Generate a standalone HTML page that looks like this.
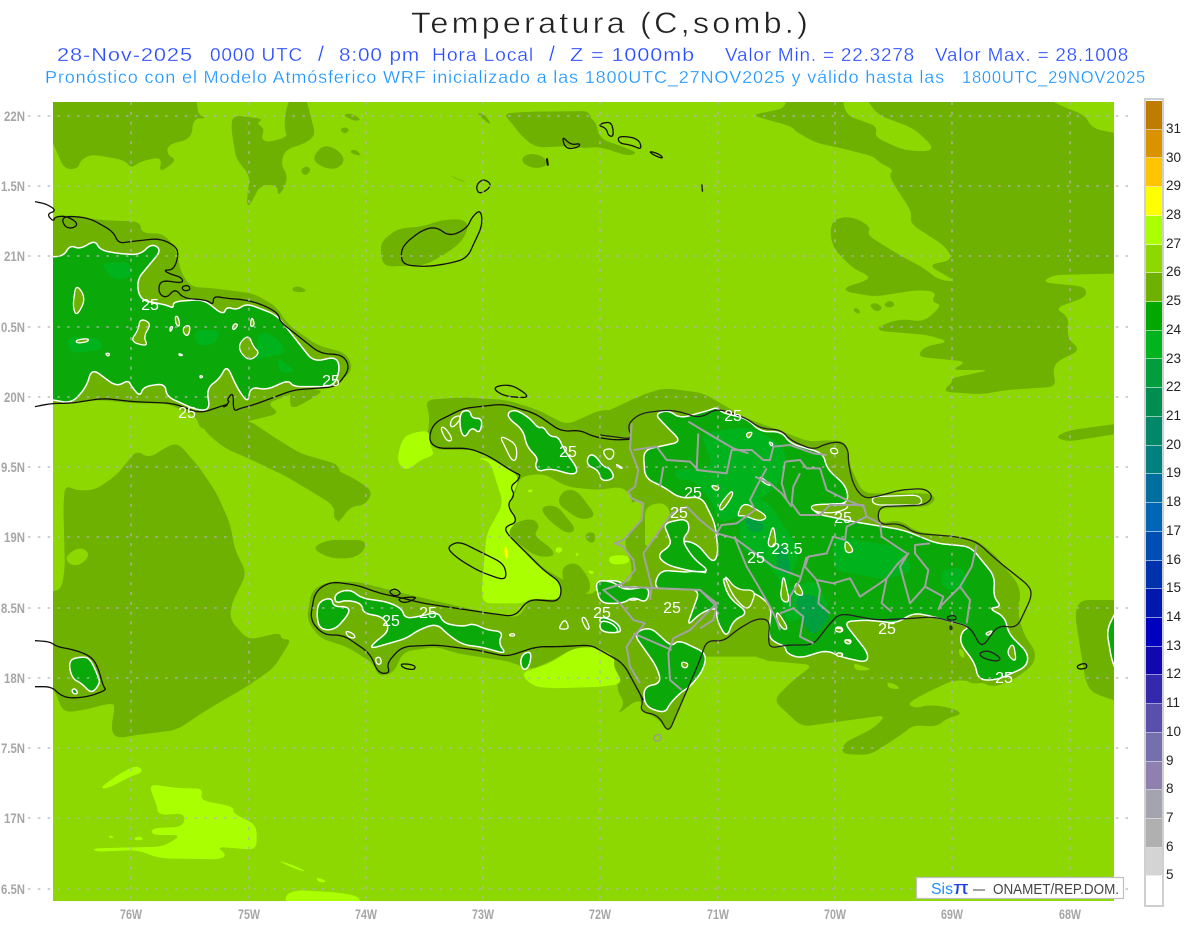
<!DOCTYPE html>
<html lang="es"><head><meta charset="utf-8"><title>Temperatura (C,somb.)</title>
<style>
html,body{margin:0;padding:0;background:#fff}
body{width:1200px;height:927px;overflow:hidden;position:relative}
svg{position:absolute;left:0;top:0}
svg *{vector-effect:non-scaling-stroke}
text{font-family:"Liberation Sans",sans-serif}
.ax{fill:#a6a6a6;font-size:14px;font-weight:bold}
.cb{fill:#222;font-size:13.5px}
.v{fill:#fff;font-size:16px;text-anchor:middle}
.t2 text{stroke:#fff;stroke-width:.25px;letter-spacing:.8px}
#bar{position:absolute;left:1144px;top:98px;width:15.5px;height:803px;border:2px solid #cfcfcf;padding:1px 0 1px 0;display:flex;flex-direction:column}
#bar i{flex:1;display:block;border-bottom:1px solid rgba(255,255,255,.55);box-sizing:border-box}
</style></head><body>
<svg width="1200" height="927" viewBox="0 0 1200 927" xmlns="http://www.w3.org/2000/svg">
<defs><clipPath id="m"><rect x="53" y="102" width="1061" height="799"/></clipPath></defs>
<text x="411" y="33" font-size="30" textLength="400" lengthAdjust="spacingAndGlyphs" fill="#222" stroke="#fff" stroke-width=".45" letter-spacing="3">Temperatura (C,somb.)</text>
<g fill="#2a4cff" font-size="18.5" class="t2">
<text x="57" y="61" textLength="136" lengthAdjust="spacingAndGlyphs">28-Nov-2025</text>
<text x="210" y="61" textLength="93" lengthAdjust="spacingAndGlyphs">0000 UTC</text>
<text x="318" y="61" font-size="21">/</text>
<text x="339" y="61" textLength="81" lengthAdjust="spacingAndGlyphs">8:00 pm</text>
<text x="432" y="61" textLength="102" lengthAdjust="spacingAndGlyphs">Hora Local</text>
<text x="549" y="61" font-size="21">/</text>
<text x="570" y="61" textLength="125" lengthAdjust="spacingAndGlyphs">Z = 1000mb</text>
<text x="725" y="61" textLength="190" lengthAdjust="spacingAndGlyphs">Valor Min. = 22.3278</text>
<text x="935" y="61" textLength="194" lengthAdjust="spacingAndGlyphs">Valor Max. = 28.1008</text>
</g>
<g fill="#1d96ff" font-size="17.5" class="t2">
<text x="45" y="83" textLength="900" lengthAdjust="spacingAndGlyphs">Pronóstico con el Modelo Atmósferico WRF inicializado a las 1800UTC_27NOV2025 y válido hasta las</text>
<text x="962" y="83" textLength="184" lengthAdjust="spacingAndGlyphs">1800UTC_29NOV2025</text>
</g>

<g clip-path="url(#m)">
<rect x="53" y="102" width="1061" height="799" fill="#8cd800"/>
<!-- MID GREEN -->
<g fill="#6eb100">
<g transform="translate(40 95) scale(.34437 .33333)">
<polygon points="10,0 455,0 455,20 460,60 485,70 445,70 440,130 370,150 370,180 398,195 345,235 355,185 290,200 265,220 245,195 150,178 118,195 110,222 70,222 38,145 10,80"/>
<polygon points="560,60 650,72 628,85 652,100 642,130 660,143 720,125 710,105 712,50 730,0 770,0 790,80 800,120 770,145 710,165 700,210 718,240 712,275 690,305 690,270 640,270 620,310 605,335 600,320 610,240 570,195 555,100"/>
<polygon points="790,190 820,150 860,160 888,195 860,225 815,215"/>
<polygon points="755,225 775,212 788,225 770,245"/>
<polygon points="870,105 885,95 900,105 885,117"/>
<polygon points="878,58 905,55 935,75 910,78"/>
<polygon points="898,170 915,162 935,182 915,180"/>
<polygon points="1265,55 1290,55 1315,95"/>
<polygon points="1345,55 1425,50 1600,48 1600,150 1440,158 1400,125 1370,85"/>
<polygon points="1398,190 1420,175 1460,182 1478,210 1440,222 1405,208"/>
<polygon points="990,440 1040,400 1110,395 1165,375 1230,372 1245,395 1225,440 1180,475 1120,510 1000,515 990,480"/>
<polygon points="730,580 750,572 780,590 740,592"/>
<polygon points="1185,238 1245,265 1215,255"/>
</g>
<g transform="translate(560 95) scale(.35714 .33333)">
<polygon points="0,55 60,58 100,75 110,130 200,165 215,175 190,183 110,155 60,160 0,150"/>
<polygon points="535,60 630,40 635,0 1340,0 1420,40 1470,60 1490,100 1580,120 1580,535 1380,540 1350,562 1470,575 1475,605 1385,640 1425,665 1420,730 1458,765 1390,800 1380,830 1390,875 1250,885 1180,898 1070,890 1100,860 1095,850 1205,825 1095,825 1140,800 1000,785 1020,755 1090,740 1030,720 895,708 890,695 950,672 1020,680 1070,630 1040,620 1055,590 1000,585 880,605 800,590 800,575 850,560 870,545 820,520 765,460 755,405 770,370 820,365 870,395 860,420 950,480 1020,520 1060,555 1110,560 1030,510 1100,495 1080,455 980,385 985,350 945,285 920,240 935,225 890,200 880,185 770,155 720,145 660,110 650,95"/>
<polygon points="1385,1025 1430,1005 1570,985 1570,1015 1420,1040"/>
<polygon points="820,640 835,640 842,655 828,655"/>
<polygon points="865,630 885,622 905,640 885,652"/>
<polygon points="905,628 925,615 940,630 920,640"/>
</g>
<g transform="translate(560 95) scale(.35714 .33333)" fill="#8cd800">
<polygon points="790,0 850,0 890,60 990,100 1045,155 1030,170 960,165 880,125 890,95 800,60"/>
</g>
<g transform="translate(40 420) scale(.33333)">
<polygon points="-20,515 39,515 65,505 75,440 70,260 75,195 110,212 165,210 230,165 290,90 325,115 395,72 420,75 480,145 530,220 570,310 585,390 620,460 575,550 570,600 625,660 720,638 725,658 755,658 700,745 620,800 500,870 410,930 290,945 230,955 213,930 225,855 210,850 130,870 70,878 39,800 -20,800"/>
<polygon points="475,0 625,0 700,50 780,100 900,135 900,310 890,300 880,255 815,215 740,170 625,115 555,85 500,40"/>
</g>
<g transform="translate(40 420) scale(.33333)" fill="#8cd800">
<polygon points="80,405 120,380 150,400 130,430 100,438 80,425"/>
</g>
<g transform="translate(0 190) scale(.33333)">
<polygon points="120,90 200,75 300,90 420,95 425,130 490,130 530,180 540,240 570,290 640,295 760,310 830,350 860,400 950,465 1040,490 1060,540 1000,590 880,610 800,640 840,670 760,690 600,720 590,680 500,640 400,640 300,630 120,640"/>
</g>
<g transform="translate(290 390) scale(.33333)">
<polygon points="0,0 105,0 50,35 0,60"/>
<polygon points="0,185 100,220 200,270 250,305 225,345 180,350 150,395 130,385 135,345 60,300 0,265"/>
<polygon points="65,475 110,450 225,450 225,480 190,505 120,505"/>
<polygon points="405,30 520,22 650,30 745,60 830,105 930,60 1000,60 1100,50 1100,900 1050,900 1000,960 1000,880 970,850 975,800 900,770 850,775 780,815 720,840 660,815 500,790 440,770 340,785 310,850 265,860 250,820 170,770 90,745 50,690 65,600 115,575 200,575 340,610 510,650 650,680 690,680 720,625 810,630 815,580 760,540 650,425 680,395 655,345 690,260 650,235 560,180 440,180 410,150 420,80"/>
</g>
<g transform="translate(600 390) scale(.33333)">
<polygon points="-39,165 -3,75 126,15 192,-6 309,9 438,84 630,156 680,150 740,155 750,230 790,310 985,310 1010,325 985,350 835,355 835,400 900,390 950,425 1130,450 1190,500 1260,590 1260,650 1200,650 1290,760 1290,830 1240,860 1150,880 1100,880 1060,800 800,700 500,800 300,800 0,700"/>
<polygon points="50,975 110,930 130,940 125,965 175,985 205,1030 225,985 320,780 360,760 250,600 60,820 50,900 75,940"/>
<polygon points="400,710 415,760 480,810 560,800 540,720"/>
</g>
<g transform="translate(760 600) scale(.33333)">
<polygon points="0,0 780,0 775,50 795,110 828,155 820,195 760,240 700,262 660,245 580,240 495,280 440,312 470,325 500,315 560,320 612,340 560,355 530,380 460,375 430,400 330,465 245,462 250,430 340,385 380,345 125,380 40,300 100,240 160,195 0,180"/>
<polygon points="960,0 1090,0 1090,310 1000,280 978,250 955,110 945,40"/>
</g>
<g transform="translate(760 600) scale(.33333)" fill="#8cd800">
<polygon points="380,245 410,255 420,268 385,265"/>
<polygon points="280,190 300,195 340,210 285,212"/>
<polygon points="595,145 610,150 615,175 600,170"/>
</g>
</g>
<!-- LIGHT PATCHES ON LAND -->
<g fill="#8cd800">
<g transform="translate(290 390) scale(.33333)">
<polygon points="690,260 760,250 830,290 920,300 1000,290 1030,330 1010,440 970,470 1010,490 1020,560 940,580 900,620 820,570 760,535 690,465 650,425 680,395 655,345 680,300"/>
</g>
<g transform="translate(600 390) scale(.33333)">
<polygon points="100,330 130,340 125,390 70,450 95,520 95,580 10,570 0,470 60,440 60,380"/>
<polygon points="135,350 190,335 215,370 190,410 135,480"/>
</g>
</g>
<g fill="#6eb100" transform="translate(290 390) scale(.33333)">
<polygon points="680,395 730,385 750,410 730,435 790,480 790,500 740,500 690,465 650,425"/>
<polygon points="750,350 800,345 860,420 830,432 770,385"/>
<polygon points="820,300 860,300 920,380 870,390 800,340"/>
<polygon points="885,430 915,425 915,460 890,455"/>
<polygon points="815,530 860,515 900,570 900,610 840,620 820,580"/>
</g>
<!-- BRIGHT -->
<g fill="#aaff00">
<g transform="translate(290 390) scale(.33333)">
<polygon points="560,205 600,215 640,340 590,430 575,600 580,640 700,640 720,625 810,630 815,580 760,540 700,480 650,430 680,395 655,345 690,262 650,235 600,205"/>
<polygon points="690,850 780,820 850,775 920,770 975,800 970,830 1000,880 940,890 800,895 730,890"/>
<polygon points="320,215 335,150 360,130 420,120 420,170 435,195 390,210 350,245"/>
<polygon points="955,497 1015,495 1020,520 960,525"/>
<polygon points="800,470 820,475 810,490 795,485"/>
<polygon points="710,300 730,298 722,310"/>
<polygon points="890,540 915,545 905,555"/>
<polygon points="855,490 868,490 860,500"/>
</g>
<g transform="translate(40 420) scale(.33333)">
<polygon points="178,1105 240,1060 290,1035 312,1055 270,1070 205,1105"/>
<polygon points="325,1092 420,1105 490,1105 480,1140 580,1160 580,1180 650,1215 650,1290 530,1280 560,1305 540,1318 360,1315 290,1290 165,1295 160,1285 370,1280 425,1245 335,1245 335,1225 430,1220 435,1180 355,1185 350,1155"/>
<polygon points="280,1255 300,1248 312,1258 290,1262"/>
<polygon points="205,1245 225,1252 210,1255"/>
<polygon points="710,1320 760,1335 805,1358 760,1345"/>
<polygon points="828,1370 865,1385 835,1388"/>
<polygon points="735,1425 770,1410 900,1418 960,1430 960,1460 740,1460"/>
</g>
</g>
<polygon transform="translate(290 390) scale(.33333)" fill="#ffff00" points="642,472 652,470 655,505 645,507"/>
<!-- DARK GREEN with white contour -->
<g fill="#0aa808" stroke="#fff" stroke-width="1.5" stroke-linejoin="round">
<g transform="translate(0 190) scale(.33333)">
<polygon points="130,200 190,200 210,165 240,178 285,150 300,180 350,190 420,195 455,160 485,180 410,270 420,330 500,345 520,355 520,335 610,328 670,375 680,350 710,360 740,340 830,375 940,515 1010,500 1020,540 1000,590 880,590 865,570 800,600 750,590 745,640 715,600 680,525 660,565 620,595 630,660 590,660 500,620 495,580 430,590 420,620 395,590 385,570 350,590 275,535 260,590 215,640 130,625"/>
</g>
<g transform="translate(40 420) scale(.33333)">
<polygon points="85,720 125,710 150,715 175,770 180,790 155,822 125,790 95,775"/>
<polygon points="95,810 105,805 115,820 100,822"/>
</g>
<g transform="translate(290 390) scale(.33333)">
<polygon points="85,635 125,622 130,650 175,650 178,670 135,720 90,718 80,680"/>
<polygon points="135,610 180,597 215,625 290,635 335,655 345,685 385,680 445,665 460,700 520,710 550,700 590,720 640,725 625,760 650,792 570,770 520,765 475,735 440,700 385,720 350,745 245,775 245,765 300,720 280,680 220,670 215,640 170,630 135,640"/>
<polygon points="510,65 540,60 545,85 578,85 570,132 545,110 525,145 510,120"/>
<polygon points="655,65 680,60 720,85 745,115 760,110 780,140 805,140 820,175 865,240 850,255 780,235 745,245 735,225 745,205 710,170 700,120 655,85"/>
<polygon points="895,195 915,195 940,230 960,235 975,265 935,275 925,240 890,225"/>
<polygon points="690,815 700,790 725,785 718,830 700,842"/>
<polygon points="940,680 985,700 995,730 950,720 925,690"/>
<polygon points="945,570 1000,575 985,600 1050,585 1050,630 1010,630 980,600 945,590"/>
</g>
<g transform="translate(600 390) scale(.33333)">
<polygon points="165,72 205,60 240,85 330,60 350,52 370,70 440,85 480,125 545,125 570,160 670,190 680,235 740,290 745,340 630,345 650,372 760,395 910,420 1010,460 1112,470 1185,560 1180,620 1205,650 1165,655 1215,680 1225,730 1285,790 1280,830 1190,870 1135,870 1125,820 1080,760 1085,725 1110,710 1000,680 940,668 890,700 800,690 730,695 805,790 800,818 720,800 680,780 600,805 560,790 555,768 530,760 505,740 515,650 470,610 410,600 365,555 385,620 445,670 400,690 380,745 350,690 350,650 300,670 260,710 300,600 160,595 180,540 240,545 330,550 250,500 240,450 290,460 340,520 355,490 345,400 305,320 240,325 190,290 135,265 130,180 245,155 190,100"/>
<polygon points="190,400 260,385 270,420 245,450 280,505 330,545 280,545 200,525 170,495 215,465 205,435"/>
<polygon points="100,730 150,710 215,770 235,750 320,790 310,840 270,890 245,905 210,940 195,970 135,950 130,890 185,880 170,830"/>
<polygon points="-15,570 40,575 70,600 150,590 140,640 100,620 70,640 0,640"/>
<polygon points="0,690 40,700 60,730 0,725"/>
</g>
<g transform="translate(760 600) scale(.33333)">
<polyline points="1070,30 1040,90 1055,180 1070,215"/>
</g>
</g>
<!-- LIGHTER GREEN INTERNAL PATCHES -->
<g fill="#00b31c">
<g transform="translate(0 190) scale(.33333)">
<polygon points="300,220 390,215 395,265 340,270"/>
<polygon points="580,420 660,420 650,460 590,470"/>
<polygon points="780,420 840,450 860,490 760,510"/>
<polygon points="830,500 890,545 840,550"/>
<polygon points="200,440 300,445 310,480 210,490"/>
</g>
<g transform="translate(600 390) scale(.33333)">
<polygon points="300,130 440,110 500,135 560,180 540,280 480,330 420,380 360,400 340,340 280,270 230,270 220,240 340,230"/>
<polygon points="420,330 500,330 560,420 600,480 560,600 500,520 420,470"/>
<polygon points="700,440 900,470 940,540 860,570 700,540"/>
<polygon points="1020,540 1090,530 1100,600 1030,600"/>
<polygon points="540,600 650,570 690,660 560,700"/>
</g>
</g>
<g fill="#00a040" transform="translate(600 390) scale(.33333)">
<polygon points="580,620 640,610 695,680 640,740 610,700"/>
<polygon points="430,390 470,370 500,420 450,430"/>
<polygon points="530,470 560,470 575,560 530,540"/>
</g>
<!-- M holes with white outline -->
<g fill="#6eb100" stroke="#fff" stroke-width="1.3" stroke-linejoin="round">
<g transform="translate(0 190) scale(.33333)">
<polygon points="228,280 258,325 230,380 218,350"/>
<polygon points="420,385 455,400 430,440 445,470 390,455 415,420"/>
<polygon points="745,432 760,470 780,490 745,515 710,470"/>
<polygon points="550,410 572,405 565,440 550,430"/>
<polygon points="755,378 765,405 750,412"/>
<polygon points="525,378 535,380 540,410 528,405"/>
<polygon points="510,410 520,410 510,428"/>
<polygon points="705,400 715,405 700,422 697,410"/>
<polygon points="228,450 265,445 265,455 230,460"/>
<polygon points="315,490 330,490 325,500"/>
<polygon points="535,490 550,495 540,498"/>
<polygon points="600,555 610,560 600,565"/>
</g>
<g transform="translate(290 390) scale(.33333)">
<polygon points="485,85 510,75 510,90 490,112 480,108"/>
<polygon points="450,112 465,112 490,150 470,155"/>
<polygon points="630,140 650,145 680,165 680,210 665,212 645,170"/>
<polygon points="935,180 970,175 972,200 955,212"/>
<polygon points="975,220 1000,235 990,235"/>
<polygon points="805,715 825,685 838,715 820,718"/>
<polygon points="873,685 885,680 900,715 890,720"/>
<polygon points="165,722 190,730 197,745 175,742"/>
<polygon points="255,805 270,800 275,820 262,825"/>
<polygon points="658,733 672,730 675,738 660,738"/>
</g>
<g transform="translate(600 390) scale(.33333)">
<polygon points="437,130 460,125 445,148"/>
<polygon points="505,155 520,160 515,170"/>
<polygon points="690,175 710,175 715,190 695,192"/>
<polygon points="330,285 360,290 350,305"/>
<polygon points="395,300 400,315 365,365 355,350"/>
<polygon points="475,255 520,290 490,280"/>
<polygon points="410,380 430,335 505,380 480,395 430,375"/>
<polygon points="630,345 740,340 745,355 700,370 640,365"/>
<polygon points="735,445 765,485 735,490"/>
<polygon points="815,320 960,315 968,345 820,345"/>
<polygon points="705,712 725,710 730,725 712,725"/>
<polygon points="735,748 755,750 750,762 735,760"/>
<polygon points="710,788 730,790 725,800 712,798"/>
<polygon points="1155,730 1180,720 1165,738"/>
<polygon points="1240,755 1250,820 1218,790"/>
<polygon points="245,815 265,820 260,835 245,830"/>
<polygon points="165,590 240,560 260,545 330,550 340,595 190,595" fill="#0aa808" stroke="none"/>
<polygon points="370,550 400,620 445,665 470,600 410,600"/>
<polygon points="550,550 570,640 540,630"/>
<polygon points="520,400 530,470 500,470"/>
<polygon points="590,570 615,620 580,610"/>
</g>
<g transform="translate(760 600) scale(.33333)">
<polygon points="225,85 245,85 245,97 228,95"/>
<polygon points="255,118 272,125 270,132 255,128"/>
<polygon points="230,158 248,160 245,170 230,168"/>
<polygon points="50,30 85,85 70,90 50,60"/>
</g>
</g>
</g>

<!-- BLACK COASTS -->
<g fill="none" stroke="#111" stroke-width="1.3" stroke-linejoin="round">
<g transform="translate(0 190) scale(.33333)">
<polyline points="105,35 140,42 170,62 140,72 160,95 165,80 200,78 235,100 220,115 195,112 185,85 210,78 270,85 340,125 355,160 390,155 480,145 530,170 535,200 520,240 490,240 510,252 545,262 550,280 480,270 475,310 500,325 525,295 550,325 620,330 640,345 640,318 680,325 740,330 790,345 835,370 840,395 960,490 1030,495 1050,535 1010,590 880,600 760,645 720,655 700,665 700,605 680,630 690,635 665,655 690,640 600,670 520,640 400,635 310,625 210,640 155,640 105,650"/>
<polygon points="545,290 565,285 572,300 550,303"/>
</g>
<g transform="translate(40 420) scale(.33333)">
<polyline points="-15,662 30,665 50,680 105,690 155,710 175,745 190,800 200,810 145,830 90,835 60,825 35,800 -15,800"/>
</g>
<g transform="translate(40 95) scale(.34437 .33333)">
<polygon points="1047,475 1060,445 1110,405 1150,395 1190,425 1240,400 1255,365 1280,343 1285,390 1240,490 1190,505 1125,515 1055,510"/>
<polygon points="1265,272 1288,250 1315,272 1275,300"/>
<polyline points="1472,190 1475,212" stroke-width="2"/>
</g>
<g transform="translate(560 95) scale(.35714 .33333)">
<polygon points="5,122 30,150 58,145 50,158 15,162"/>
<polygon points="105,90 135,80 147,90 150,125 135,122 130,100"/>
<polygon points="162,122 220,130 230,165 200,150 165,145"/>
<polygon points="250,168 280,178 290,192 258,178"/>
<polyline points="397,268 399,290"/>
</g>
<g transform="translate(760 600) scale(.33333)">
<polygon points="950,197 978,188 982,205 955,208"/>
</g>
<g transform="translate(290 390) scale(.33333)">
<polyline points="690,255 660,240 600,200 540,175 440,175 415,150 430,100 520,55 640,42 735,70 815,125 870,120 910,140 970,150 1020,148"/>
<polyline points="690,255 685,270 660,290 675,315 650,345 685,395 645,410 650,430 700,480 760,540 815,580 810,635 715,628 675,680 600,670 500,655 400,640 340,625 270,610 200,585 120,575 75,605 60,690 100,735 160,735 240,790 265,850 300,850 290,820 335,770 440,765 560,780 650,800 740,770 810,770 900,765 930,780 1000,820 1060,930"/>
<polygon points="480,465 510,455 570,485 640,520 650,555 640,570 570,545 510,510 475,480"/>
<polygon points="295,605 315,595 335,610 315,620"/>
<polygon points="320,625 380,620 370,630 340,640"/>
<polygon points="330,820 375,825 375,840 340,835"/>
<polygon points="605,-8 660,-18 710,12 710,24 640,18"/>
</g>
<g transform="translate(600 390) scale(.33333)" stroke="#222">
<polyline points="0,135 40,140 100,148 80,105 120,70 200,60 240,65 300,85 350,55 440,85 480,115 545,120 570,150 640,180 680,160 725,155 745,180 745,220 760,285 790,325 830,320 900,300 975,295 1000,320 975,345 835,350 835,405 900,400 945,430 1070,440 1130,455 1190,510 1290,590 1295,620 1250,715 1195,705 1145,775 1110,710 1000,680 940,685 830,690 720,670 690,700 640,765 560,765 510,775 505,745 510,690 470,685 410,720 370,755 320,750 300,810 205,1030 175,975 120,965 130,930 70,820 0,780"/>
<polygon points="1135,790 1165,780 1205,805 1190,815 1150,805"/>
<polygon points="1040,680 1065,675 1070,690 1045,690"/>
<polygon points="1050,705 1058,715 1050,720"/>
<polygon points="160,1040 180,1030 185,1050 165,1055" stroke="#999"/>
</g>
</g>
<!-- GRAY BORDERS -->
<g id="gb" fill="none" stroke="#a2a2a2" stroke-width="2" stroke-linejoin="round" transform="translate(600 390) scale(.33333)">
<polyline points="95,100 90,175 115,240 105,290 85,305 95,325 130,340 125,390 70,450 45,460 70,470 100,510 105,540 70,580 10,600 60,640 100,690 135,700 100,740 80,770 90,830 120,880"/>
<polyline points="100,180 170,170 200,210 270,215 295,240"/>
<polyline points="295,130 290,240 380,250 395,180 455,180 490,210 510,210 520,170 570,165 640,190 680,195"/>
<polyline points="265,95 340,140 400,175 445,190"/>
<polyline points="555,215 600,210 620,235 660,235 680,300 740,330 790,350"/>
<polyline points="600,250 580,290 575,340 600,375"/>
<polyline points="555,215 545,280 560,330"/>
<polyline points="465,260 510,280 545,310 575,350"/>
<polyline points="500,235 470,290 450,330 465,360 410,400 365,405 350,430 405,445 440,530 470,580 510,650 530,690 540,720"/>
<polyline points="800,380 840,400 845,440 920,490"/>
<polyline points="600,375 660,375 690,345 790,345 800,380 740,410 735,450 700,440 680,490 625,500 615,530 650,570 660,600 655,640 690,670"/>
<polyline points="620,500 600,570 570,620 570,650"/>
<polyline points="405,445 520,530 600,560"/>
<polyline points="650,570 700,580 750,565 780,620 840,580 860,565 890,525 925,490 900,530 930,640 975,590 985,540 945,490 945,465 990,460"/>
<polyline points="860,565 845,640 875,665"/>
<polyline points="975,590 1030,620 1015,660"/>
<polyline points="1130,465 1115,530 1080,590 1110,630 1100,700"/>
<polyline points="1080,590 1020,650"/>
<polyline points="130,490 195,400 215,370 260,350 300,390 350,430"/>
<polyline points="130,490 155,590 150,630"/>
<polyline points="60,590 300,600 350,640"/>
<polyline points="350,640 270,720 220,745 205,790 210,870 245,900"/>
<polyline points="100,730 215,780"/>
<polyline points="540,670 580,655 610,680 600,740 640,760"/>
<polyline points="180,290 190,230"/>
<polyline points="300,600 350,650 340,690 300,715"/>
</g>
<!-- GRID -->
<g stroke="#b4b4b4" stroke-width="1.3" fill="none">
<path stroke-dasharray="2.5 7.3" d="M28 116H1135M28 186H1135M28 256H1135M28 327H1135M28 397H1135M28 467H1135M28 537H1135M28 608H1135M28 678H1135M28 748H1135M28 818H1135M28 889H1135"/>
<path stroke-dasharray="3 6.8" d="M131 102V905M249 102V905M366 102V905M483 102V905M600 102V905M718 102V905M835 102V905M952 102V905M1070 102V905"/>
</g>
<!-- VALUE LABELS -->
<g class="vv">
<text class="v" x="150" y="310">25</text><text class="v" x="187" y="418">25</text><text class="v" x="331" y="386">25</text>
<text class="v" x="568" y="457">25</text><text class="v" x="733" y="421">25</text><text class="v" x="693" y="498">25</text>
<text class="v" x="679" y="518">25</text><text class="v" x="843" y="523">25</text><text class="v" x="787" y="554">23.5</text>
<text class="v" x="756" y="563">25</text><text class="v" x="672" y="613">25</text><text class="v" x="602" y="618">25</text>
<text class="v" x="391" y="626">25</text><text class="v" x="428" y="618">25</text><text class="v" x="887" y="634">25</text><text class="v" x="1004" y="683">25</text>
</g>
<!-- AXES -->
<g class="ax">
<text x="4" y="121" textLength="21" lengthAdjust="spacingAndGlyphs">22N</text>
<text x="1" y="191" textLength="24" lengthAdjust="spacingAndGlyphs">1.5N</text>
<text x="4" y="261" textLength="21" lengthAdjust="spacingAndGlyphs">21N</text>
<text x="1" y="332" textLength="24" lengthAdjust="spacingAndGlyphs">0.5N</text>
<text x="4" y="402" textLength="21" lengthAdjust="spacingAndGlyphs">20N</text>
<text x="1" y="472" textLength="24" lengthAdjust="spacingAndGlyphs">9.5N</text>
<text x="4" y="542" textLength="21" lengthAdjust="spacingAndGlyphs">19N</text>
<text x="1" y="613" textLength="24" lengthAdjust="spacingAndGlyphs">8.5N</text>
<text x="4" y="683" textLength="21" lengthAdjust="spacingAndGlyphs">18N</text>
<text x="1" y="753" textLength="24" lengthAdjust="spacingAndGlyphs">7.5N</text>
<text x="4" y="823" textLength="21" lengthAdjust="spacingAndGlyphs">17N</text>
<text x="1" y="894" textLength="24" lengthAdjust="spacingAndGlyphs">6.5N</text>
<text x="120" y="919" textLength="22" lengthAdjust="spacingAndGlyphs">76W</text>
<text x="238" y="919" textLength="22" lengthAdjust="spacingAndGlyphs">75W</text>
<text x="355" y="919" textLength="22" lengthAdjust="spacingAndGlyphs">74W</text>
<text x="472" y="919" textLength="22" lengthAdjust="spacingAndGlyphs">73W</text>
<text x="589" y="919" textLength="22" lengthAdjust="spacingAndGlyphs">72W</text>
<text x="707" y="919" textLength="22" lengthAdjust="spacingAndGlyphs">71W</text>
<text x="824" y="919" textLength="22" lengthAdjust="spacingAndGlyphs">70W</text>
<text x="941" y="919" textLength="22" lengthAdjust="spacingAndGlyphs">69W</text>
<text x="1059" y="919" textLength="22" lengthAdjust="spacingAndGlyphs">68W</text>
</g>
<!-- LOGO BOX -->
<rect x="916.5" y="877.5" width="207" height="21" fill="#fff" stroke="#c0c0c0" stroke-width="1.2"/>
<text x="931" y="894" font-size="16" fill="#1e90ff" textLength="22" lengthAdjust="spacingAndGlyphs">Sis</text>
<text x="953" y="894" font-size="18" fill="#1f3fe0" textLength="16" lengthAdjust="spacingAndGlyphs">π</text>
<text x="973" y="894" font-size="15" fill="#444" textLength="12" lengthAdjust="spacingAndGlyphs">–</text>
<text x="993" y="894" font-size="14.5" fill="#444" textLength="126" lengthAdjust="spacingAndGlyphs">ONAMET/REP.DOM.</text>
<!-- COLORBAR LABELS -->
<g class="cb">
<text x="1166" y="133">31</text><text x="1166" y="162">30</text><text x="1166" y="190">29</text><text x="1166" y="219">28</text><text x="1166" y="248">27</text><text x="1166" y="276">26</text><text x="1166" y="305">25</text><text x="1166" y="334">24</text><text x="1166" y="363">23</text><text x="1166" y="391">22</text><text x="1166" y="420">21</text><text x="1166" y="449">20</text><text x="1166" y="477">19</text><text x="1166" y="506">18</text><text x="1166" y="535">17</text><text x="1166" y="564">16</text><text x="1166" y="592">15</text><text x="1166" y="621">14</text><text x="1166" y="650">13</text><text x="1166" y="678">12</text><text x="1166" y="707">11</text><text x="1166" y="736">10</text><text x="1166" y="765">9</text><text x="1166" y="793">8</text><text x="1166" y="822">7</text><text x="1166" y="851">6</text><text x="1166" y="879">5</text>
</g>
</svg>
<div id="bar">
<i style="background:#c07c00"></i><i style="background:#da9200"></i><i style="background:#ffc400"></i><i style="background:#ffff00"></i><i style="background:#aaff00"></i><i style="background:#8cd800"></i><i style="background:#6eb100"></i><i style="background:#00a800"></i><i style="background:#00b41e"></i><i style="background:#009e3c"></i><i style="background:#008e50"></i><i style="background:#008868"></i><i style="background:#00807e"></i><i style="background:#006e9e"></i><i style="background:#0066b8"></i><i style="background:#004eb4"></i><i style="background:#0032ae"></i><i style="background:#0018ae"></i><i style="background:#0000be"></i><i style="background:#1008ae"></i><i style="background:#3428ae"></i><i style="background:#5850ac"></i><i style="background:#7470ae"></i><i style="background:#9080b0"></i><i style="background:#a4a4ae"></i><i style="background:#b0b0b0"></i><i style="background:#d4d4d4"></i><i style="background:#fff;border:0"></i>
</div>
<script>
(function(){
function cut(p,closed,D){
  var o=[],n=p.length,m=closed?n:n-1;
  if(!closed)o.push(p[0]);
  for(var i=0;i<m;i++){
    var a=p[i],b=p[(i+1)%n],dx=b[0]-a[0],dy=b[1]-a[1],l=Math.sqrt(dx*dx+dy*dy)||1,t=Math.min(.25,D/l);
    o.push([a[0]+dx*t,a[1]+dy*t]);o.push([b[0]-dx*t,b[1]-dy*t]);
  }
  if(!closed)o.push(p[n-1]);
  return o;
}
var els=document.querySelectorAll('polygon,polyline');
for(var k=0;k<els.length;k++){
  var e=els[k];
  if(e.closest('#gb'))continue;
  var s=e.getAttribute('points').trim().split(/\s+/),p=[];
  for(var j=0;j<s.length;j++){var c=s[j].split(',');p.push([+c[0],+c[1]]);}
  if(p.length<3)continue;
  var closed=e.tagName.toLowerCase()==='polygon';
  p=cut(p,closed,14);p=cut(p,closed,7);p=cut(p,closed,3.5);
  e.setAttribute('points',p.map(function(q){return q[0].toFixed(1)+','+q[1].toFixed(1);}).join(' '));
}
})();
</script>
</body></html>
